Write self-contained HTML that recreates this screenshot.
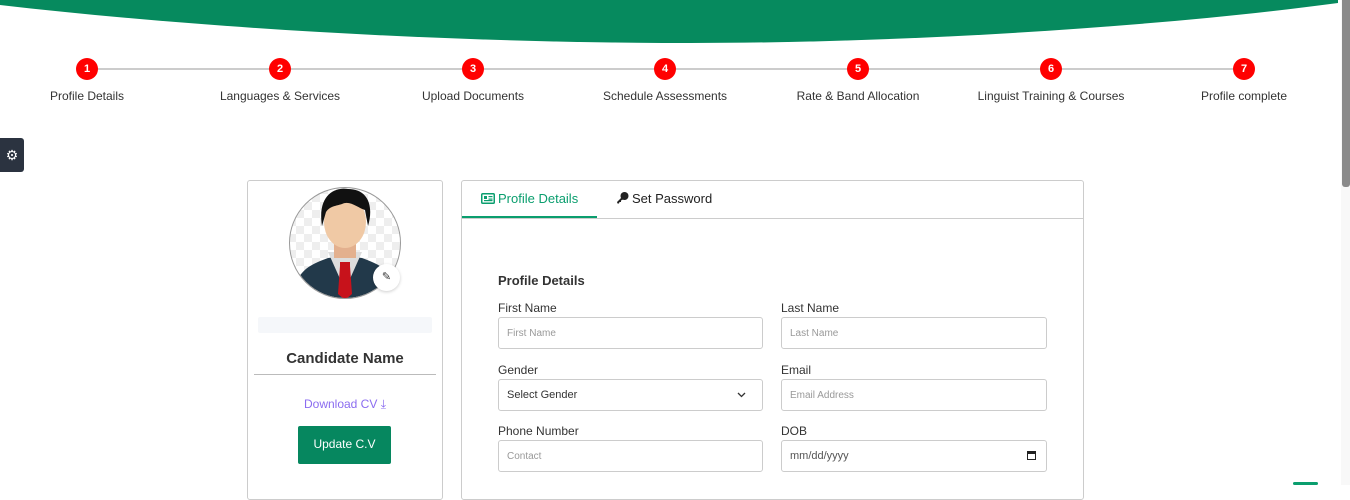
<!DOCTYPE html>
<html><head><meta charset="utf-8"><style>
*{box-sizing:border-box;margin:0;padding:0}
body{width:1350px;height:485px;overflow:hidden;background:#fff;font-family:"Liberation Sans",sans-serif;color:#333;position:relative}
.abs{position:absolute}
.step{position:absolute;top:58px;width:22px;height:22px;border-radius:50%;background:#f00;color:#fff;font-size:11px;font-weight:bold;text-align:center;line-height:22px}
.sl{position:absolute;top:89px;font-size:12px;color:#333;white-space:nowrap;transform:translateX(-50%)}
.lbl{position:absolute;font-size:12px;color:#333}
.inp{position:absolute;height:32px;border:1px solid #ccc;border-radius:3px;font-size:10px;color:#999;padding-left:8px;line-height:31px}
</style></head><body>
<svg class="abs" style="left:0;top:0" width="1340" height="50"><path d="M0 0 H1338 V3 C1150 28 900 43 690 43 C450 43 200 28 0 5 Z" fill="#068a5e"/></svg>
<div class="abs" style="left:1341px;top:0;width:9px;height:485px;background:#f8f8f8"></div>
<div class="abs" style="left:1342px;top:0;width:8px;height:187px;background:#8a8a8a;border-radius:0 0 3px 3px"></div>
<div class="abs" style="left:1293px;top:482px;width:25px;height:3px;background:#0a9e6e;border-radius:2px"></div>

<div class="abs" style="left:87px;top:68px;width:1157px;height:2px;background:#ccc"></div>
<div class="step" style="left:76px">1</div><div class="step" style="left:269px">2</div><div class="step" style="left:462px">3</div><div class="step" style="left:654px">4</div><div class="step" style="left:847px">5</div><div class="step" style="left:1040px">6</div><div class="step" style="left:1233px">7</div>
<div class="sl" style="left:87px">Profile Details</div>
<div class="sl" style="left:280px">Languages &amp; Services</div>
<div class="sl" style="left:473px">Upload Documents</div>
<div class="sl" style="left:665px">Schedule Assessments</div>
<div class="sl" style="left:858px">Rate &amp; Band Allocation</div>
<div class="sl" style="left:1051px">Linguist Training &amp; Courses</div>
<div class="sl" style="left:1244px">Profile complete</div>

<div class="abs" style="left:0;top:138px;width:24px;height:34px;background:#2b3340;border-radius:0 3px 3px 0;color:#fff;font-size:14px;line-height:34px;text-align:center">⚙</div>

<div class="abs" style="left:247px;top:180px;width:196px;height:320px;border:1px solid #ccc;border-radius:3px"></div>
<svg class="abs" style="left:288px;top:186px" width="114" height="114">
<defs><clipPath id="c"><circle cx="57" cy="57" r="55"/></clipPath><pattern id="p" width="16" height="16" patternUnits="userSpaceOnUse"><rect width="16" height="16" fill="#fff"/><rect width="8" height="8" fill="#eee"/><rect x="8" y="8" width="8" height="8" fill="#eee"/></pattern></defs>
<g clip-path="url(#c)"><rect width="114" height="114" fill="url(#p)"/>
<path d="M4 114 C8 86 18 80 40 72 L57 70 L74 72 C96 80 106 86 110 114 Z" fill="#22394a"/>
<path d="M40 66 L57 104 L74 66 Z" fill="#ddd"/>
<rect x="46" y="48" width="22" height="24" fill="#e3b08e"/>
<path d="M52 80 L62 80 L64 108 L57 114 L50 108 Z" fill="#c7121b"/>
<rect x="52" y="76" width="10" height="6" fill="#c7121b"/>
<ellipse cx="57" cy="36" rx="21" ry="26" fill="#f0c9a5"/>
<path d="M34 40 C29 8 48 1 60 3 C80 3 86 20 80 40 L77 24 C70 22 62 14 54 18 C48 20 42 20 38 26 Z" fill="#111"/></g>
<circle cx="57" cy="57" r="55.5" fill="none" stroke="#999" stroke-width="1"/></svg>
<div class="abs" style="left:373px;top:264px;width:27px;height:27px;border-radius:50%;background:#fff;box-shadow:0 1px 3px rgba(0,0,0,.2);font-size:11px;text-align:center;line-height:27px;color:#333">✎</div>
<div class="abs" style="left:258px;top:317px;width:174px;height:16px;background:#f5f7fa;border-radius:2px"></div>
<div class="abs" style="left:247px;top:350px;width:196px;text-align:center;font-size:15px;font-weight:bold;color:#333">Candidate Name</div>
<div class="abs" style="left:254px;top:374px;width:182px;height:1px;background:#bbb"></div>
<div class="abs" style="left:247px;top:397px;width:196px;text-align:center;font-size:12px;color:#8b6cf0">Download CV ⤓</div>
<div class="abs" style="left:298px;top:426px;width:93px;height:38px;background:#06875f;border-radius:2px;color:#fff;font-size:12px;text-align:center;line-height:37px">Update C.V</div>

<div class="abs" style="left:461px;top:180px;width:623px;height:320px;border:1px solid #ccc;border-radius:3px"></div>
<div class="abs" style="left:462px;top:218px;width:621px;height:1px;background:#ccc"></div>
<div class="abs" style="left:462px;top:216px;width:135px;height:2px;background:#0a9e6e"></div>
<svg class="abs" style="left:481px;top:193px" width="14" height="11"><rect x="0.75" y="0.75" width="12.5" height="9.5" rx="1" fill="none" stroke="#0a9e6e" stroke-width="1.5"/><rect x="3" y="3" width="3" height="3" fill="#0a9e6e"/><rect x="7.5" y="3" width="4" height="1.2" fill="#0a9e6e"/><rect x="7.5" y="5.5" width="4" height="1.2" fill="#0a9e6e"/><rect x="3" y="7" width="8.5" height="1.2" fill="#0a9e6e"/></svg>
<div class="abs" style="left:498px;top:191px;font-size:13px;color:#0a9e6e">Profile Details</div>
<svg class="abs" style="left:616px;top:192px" width="13" height="12"><circle cx="8.5" cy="4" r="4" fill="#222"/><path d="M6 5 L1 10 L1.5 11.5 L3 11.5 L3.5 10 L5 10 L5 8.5 L8 7 Z" fill="#222"/></svg>
<div class="abs" style="left:632px;top:191px;font-size:13px;color:#222">Set Password</div>
<div class="abs" style="left:498px;top:273px;font-size:13px;font-weight:bold;color:#333">Profile Details</div>
<div class="lbl" style="left:498px;top:301px">First Name</div><div class="lbl" style="left:781px;top:301px">Last Name</div>
<div class="inp" style="left:498px;top:317px;width:265px">First Name</div><div class="inp" style="left:781px;top:317px;width:266px">Last Name</div>
<div class="lbl" style="left:498px;top:363px">Gender</div><div class="lbl" style="left:781px;top:363px">Email</div>
<div class="inp" style="left:498px;top:379px;width:265px;color:#333;font-size:11px">Select Gender<svg style="position:absolute;right:16px;top:12px" width="9" height="6"><path d="M1 1 L4.5 4.5 L8 1" fill="none" stroke="#333" stroke-width="1.3"/></svg></div><div class="inp" style="left:781px;top:379px;width:266px">Email Address</div>
<div class="lbl" style="left:498px;top:424px">Phone Number</div><div class="lbl" style="left:781px;top:424px">DOB</div>
<div class="inp" style="left:498px;top:440px;width:265px">Contact</div><div class="inp" style="left:781px;top:440px;width:266px;color:#555;font-size:11px">mm/dd/yyyy<span style="position:absolute;right:10px;top:10px;width:9px;height:9px;border:1.5px solid #222;border-top-width:3px"></span></div>
</body></html>
